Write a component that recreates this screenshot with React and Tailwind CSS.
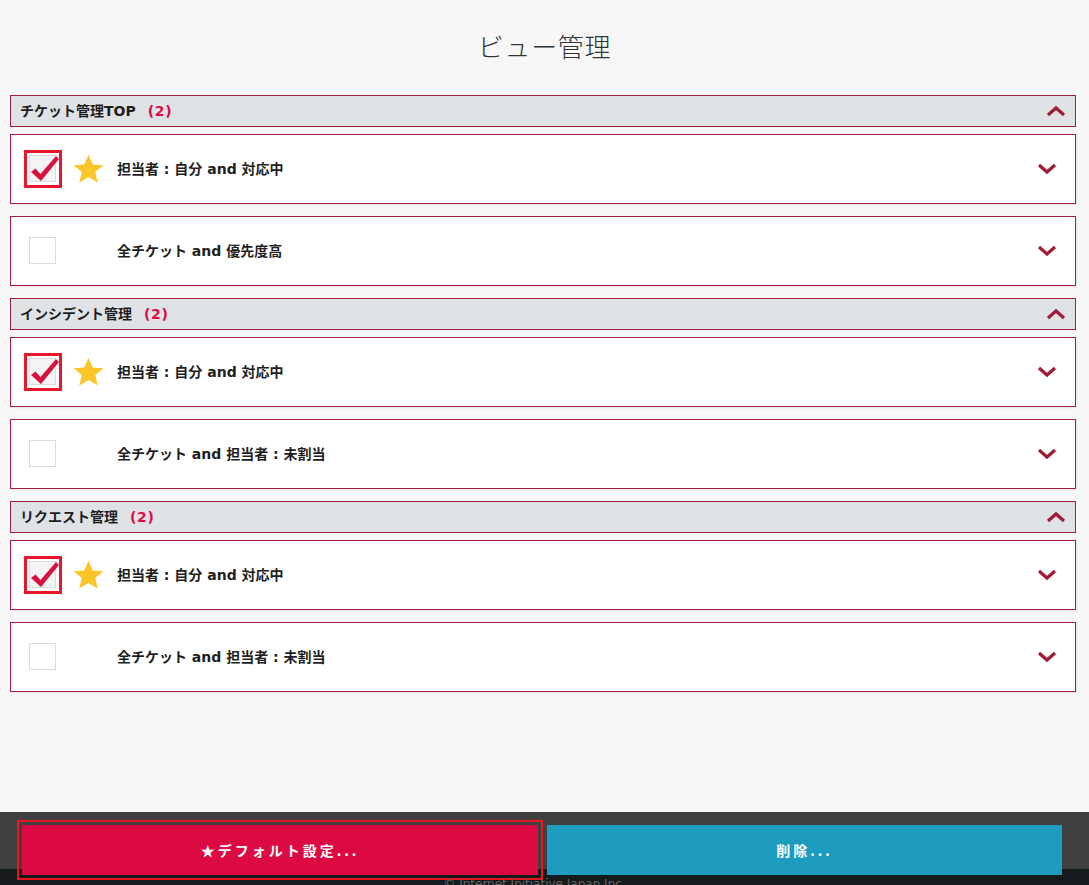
import React from 'react';

const sections = [
  {
    title: 'チケット管理TOP',
    items: [
      { label: '担当者 : 自分 and 対応中', checked: true },
      { label: '全チケット and 優先度高', checked: false },
    ],
  },
  {
    title: 'インシデント管理',
    items: [
      { label: '担当者 : 自分 and 対応中', checked: true },
      { label: '全チケット and 担当者 : 未割当', checked: false },
    ],
  },
  {
    title: 'リクエスト管理',
    items: [
      { label: '担当者 : 自分 and 対応中', checked: true },
      { label: '全チケット and 担当者 : 未割当', checked: false },
    ],
  },
];

const Chevron = ({ up = false }) => (
  <svg width="20" height="12" viewBox="0 0 20 12" className="block">
    <path
      d={up ? 'M2 10 L10 3 L18 10' : 'M2 2 L10 9 L18 2'}
      fill="none"
      stroke="#a01b38"
      strokeWidth="3.2"
    />
  </svg>
);

const Star = ({ size = 33 }) => (
  <svg width={size} height={size} viewBox="0 0 24 24" className="block">
    <path
      d="M12 1.2 L15.1 8.3 L22.8 8.9 L16.9 13.9 L18.7 21.5 L12 17.4 L5.3 21.5 L7.1 13.9 L1.2 8.9 L8.9 8.3 Z"
      fill="#fcc52a"
    />
  </svg>
);

const Checkbox = ({ checked }) => {
  const box = <div className="w-[27px] h-[27px] bg-white border border-[#dcdcdc]"></div>;
  if (!checked) {
    return <div className="w-[38px] h-[38px] pl-[5px] pt-[5px]">{box}</div>;
  }
  return (
    <div className="relative w-[38px] h-[38px] border-[3px] border-[#e8182a] pl-[2px] pt-[2px]">
      <div className="w-[27px] h-[27px] bg-[#f4f4f4] border border-[#dcdcdc]"></div>
      <svg width="32" height="30" viewBox="0 0 32 30" className="absolute left-[2px] top-[1px]">
        <path d="M2 18 L6.5 14.5 L11.5 20 L27 2 L30 5 L12 27 Z" fill="#d7123e" />
      </svg>
    </div>
  );
};

const Item = ({ label, checked }) => (
  <div className="flex items-center h-[70px] bg-white border border-[#a3203c] shadow-[1px_1px_2px_rgba(0,0,0,0.08)] pl-[13px] pr-[18px]">
    <Checkbox checked={checked} />
    <div className="w-[33px] ml-[10px] flex items-center">{checked && <Star />}</div>
    <div className="ml-[12px] flex-1 text-[14px] font-bold text-[#1e1e1e]">{label}</div>
    <Chevron />
  </div>
);

const Section = ({ title, items }) => (
  <div className="flex flex-col gap-[12px]">
    <div className="flex flex-col gap-[7px]">
      <div className="flex items-center h-[32px] bg-[#dfe3e6] border border-[#a3203c] pl-[9px] pr-[9px]">
        <span className="text-[14px] font-bold text-[#1e1e1e]">{title}</span>
        <span className="ml-[12px] text-[14px] font-bold text-[#dc0b43] tracking-[0.05em]">(2)</span>
        <div className="flex-1"></div>
        <Chevron up />
      </div>
      <Item {...items[0]} />
    </div>
    <Item {...items[1]} />
  </div>
);

export default function App() {
  return (
    <div
      className="h-[885px] overflow-hidden flex flex-col bg-[#f7f7f7]"
      style={{ fontFamily: '"DejaVu Sans", "Noto Sans CJK JP", sans-serif' }}
    >
      <div className="h-[95px] flex items-center justify-center pb-[4px]">
        <h1
          className="text-[26px] font-light text-[#333] tracking-wide"
          style={{ fontFamily: '"Noto Sans CJK JP", sans-serif' }}
        >
          ビュー管理
        </h1>
      </div>
      <div className="flex flex-col gap-[12px] pl-[10px] pr-[13px]">
        {sections.map((s, i) => (
          <Section key={i} {...s} />
        ))}
      </div>
      <div className="flex-1"></div>
      <div className="h-[73px] bg-[linear-gradient(to_bottom,#404040_0,#404040_57px,#151a1c_57px)] flex flex-col">
        <div
          className="flex pt-[13px] pl-[22px]"
          style={{ fontFamily: '"Noto Sans CJK JP", sans-serif' }}
        >
          <button className="w-[516px] h-[50px] bg-[#dc0a42] text-white text-[14px] font-bold tracking-[3px] outline-2 outline-[#e8141e] outline-offset-[3px]">
            ★デフォルト設定...
          </button>
          <button className="w-[515px] h-[50px] ml-[9px] bg-[#1d9cc0] text-white text-[14px] font-bold tracking-[3px]">
            削除...
          </button>
        </div>
        <div className="text-center text-[12px] text-[#666] leading-none mt-[3px] pr-[20px]">© Internet Initiative Japan Inc.</div>
      </div>
    </div>
  );
}
